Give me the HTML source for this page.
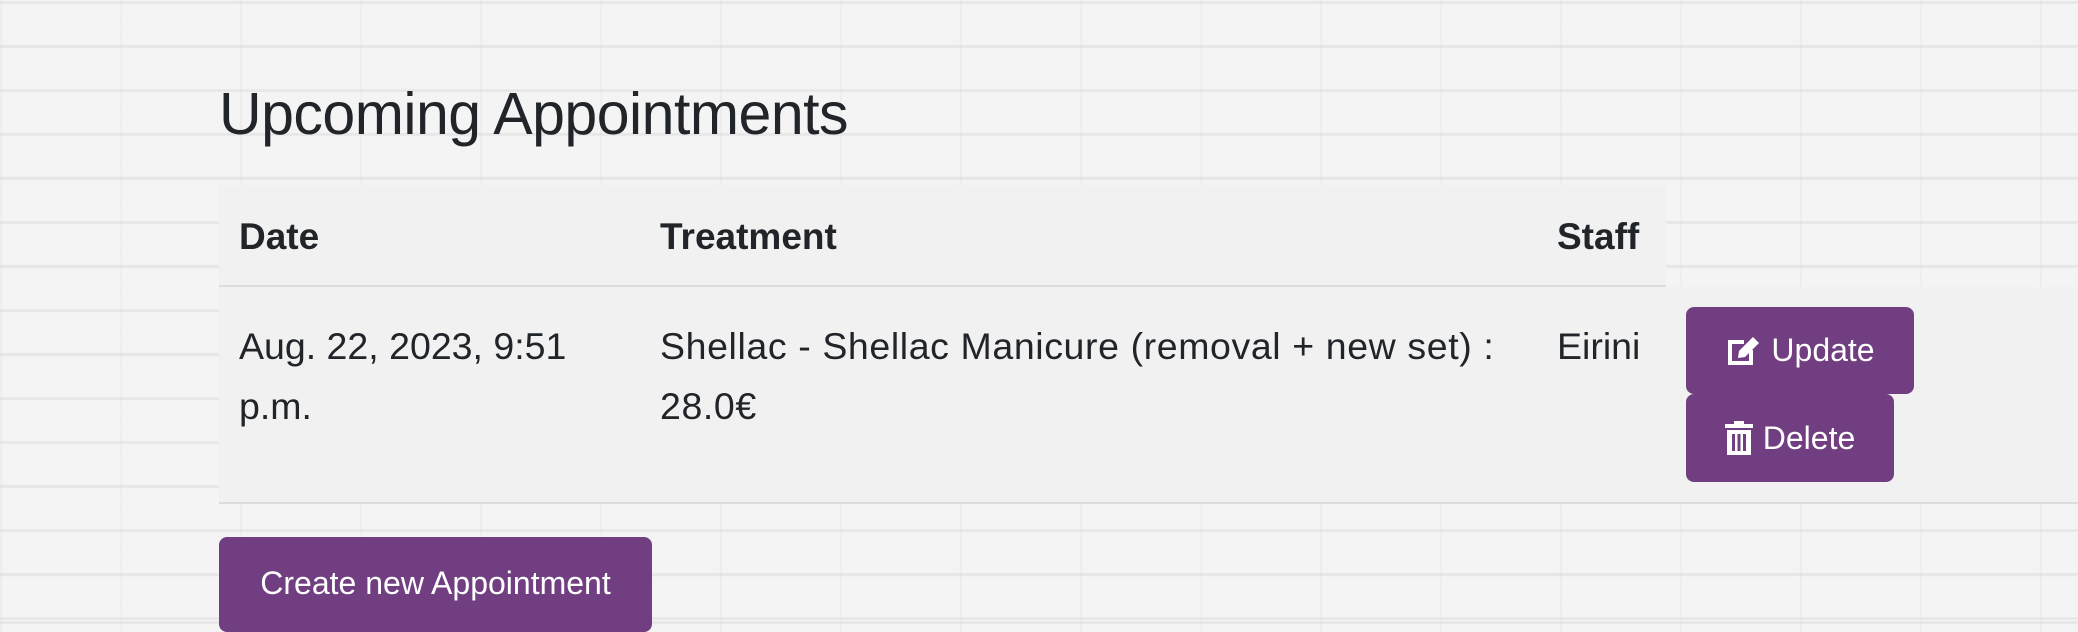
<!DOCTYPE html>
<html><head><style>
html,body{margin:0;padding:0;}
body{width:2078px;height:620px;overflow:hidden;position:relative;font-family:"Liberation Sans",sans-serif;color:#212529;
background-color:#f4f4f4;
background-image:
repeating-linear-gradient(0deg, rgba(215,215,215,.45) 0 3px, transparent 3px 44px),
repeating-linear-gradient(90deg, rgba(220,220,220,.3) 0 2px, transparent 2px 120px);
}
.abs{position:absolute;}
h2{position:absolute;left:219px;top:80px;margin:0;font-size:59px;font-weight:normal;letter-spacing:-0.5px;}
.hdr{left:219px;top:185px;width:1447px;height:100px;background:#f1f1f1;border-bottom:2px solid #dcdcdc;}
.row{left:219px;top:287px;width:1859px;height:215px;background:#f1f1f1;border-bottom:2px solid #dcdcdc;}
.th{font-weight:bold;font-size:37px;top:216px;}
.td{font-size:37.5px;line-height:60px;top:316px;}
.btn{background:#713f81;color:#fff;border-radius:8px;font-size:32px;display:flex;align-items:center;justify-content:center;gap:10px;}
</style></head><body>
<h2>Upcoming Appointments</h2>
<div class="abs hdr"></div>
<div class="abs row"></div>
<div class="abs th" style="left:239px">Date</div>
<div class="abs th" style="left:660px">Treatment</div>
<div class="abs th" style="left:1557px">Staff</div>
<div class="abs td" style="left:239px;width:400px">Aug. 22, 2023, 9:51<br>p.m.</div>
<div class="abs td" style="left:660px;width:900px;letter-spacing:0.6px">Shellac - Shellac Manicure (removal + new set) :<br>28.0€</div>
<div class="abs td" style="left:1557px">Eirini</div>
<div class="abs btn" style="left:1686px;top:307px;width:228px;height:87px">
<svg width="36" height="34" viewBox="0 0 36 34"><path d="M3 6h16v4H7v17h17V16h4v15H3z" fill="#fff"/><path d="M13 24l1-7L28 3l6 6-14 14z" fill="#fff"/></svg>Update</div>
<div class="abs btn" style="left:1686px;top:394px;width:208px;height:88px">
<svg width="28" height="34" viewBox="0 0 28 34"><rect x="0" y="3" width="28" height="4" fill="#fff"/><rect x="9" y="0" width="10" height="4" fill="#fff"/><path d="M2 9h24v25H2z" fill="#fff"/><rect x="7" y="13" width="3" height="17" fill="#713f81"/><rect x="12.5" y="13" width="3" height="17" fill="#713f81"/><rect x="18" y="13" width="3" height="17" fill="#713f81"/></svg>Delete</div>
<div class="abs btn" style="left:219px;top:537px;width:433px;height:95px;font-size:32px;align-items:flex-start;padding-top:28px;box-sizing:border-box">Create new Appointment</div>
</body></html>
